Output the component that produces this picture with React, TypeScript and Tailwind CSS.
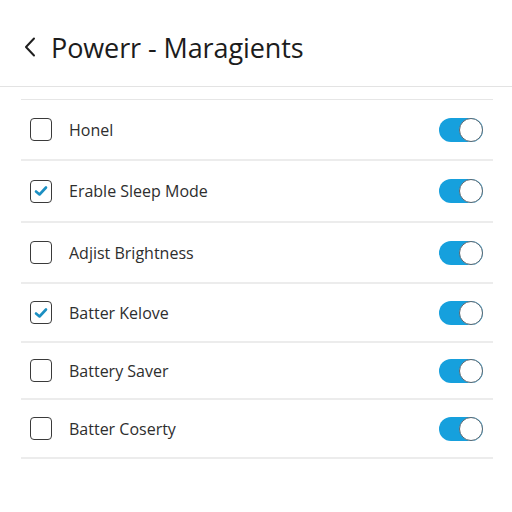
import React from 'react';

const ROWS = [
  { label: 'Honel', checked: false, h: 'h-[61px]' },
  { label: 'Erable Sleep Mode', checked: true, h: 'h-[62px]' },
  { label: 'Adjist Brightness', checked: false, h: 'h-[61px]' },
  { label: 'Batter Kelove', checked: true, h: 'h-[59px]' },
  { label: 'Battery Saver', checked: false, h: 'h-[57px]' },
  { label: 'Batter Coserty', checked: false, h: 'h-[59px]' },
];

const Checkbox: React.FC<{ checked: boolean }> = ({ checked }) => (
  <div className="w-[22px] h-[23px] rounded-[4px] border-[1.5px] border-[#3a3a3a] flex items-center justify-center shrink-0">
    {checked && (
      <svg width="14" height="12" viewBox="0 0 14 12" fill="none">
        <path d="M2 6.5 L5.5 9.5 L12 2.5" stroke="#1b8fc2" strokeWidth="2.6" strokeLinecap="round" strokeLinejoin="round" />
      </svg>
    )}
  </div>
);

const Toggle: React.FC = () => (
  <div className="w-[44px] h-[24px] rounded-full bg-[#16a0dd] relative shrink-0">
    <div className="absolute right-0 top-0 w-[24px] h-[24px] rounded-full bg-white border border-[#5a6670]" />
  </div>
);

export default function App() {
  return (
    <div className="w-[512px] h-[512px] bg-white overflow-hidden" style={{ fontFamily: '"Open Sans", sans-serif' }}>
      {/* Header */}
      <div className="h-[87px] border-b border-[#e3e3e3] flex items-center pl-[24px] pt-[8px]">
        <svg width="12" height="20" viewBox="0 0 12 20" fill="none" className="mr-[15px]">
          <path d="M10 1.5 L2 10 L10 18.5" stroke="#1f1f1f" strokeWidth="2" strokeLinecap="round" strokeLinejoin="round" />
        </svg>
        <h1 className="text-[27px] leading-none text-[#1c1c1c] tracking-[-0.1px]">Powerr - Maragients</h1>
      </div>

      {/* Settings list */}
      <div className="mx-[21px] mt-[12px] border-t border-[#e6e6e6] w-[472px]">
        {ROWS.map((row) => (
          <div key={row.label} className={`${row.h} border-b-2 border-[#ececec] flex items-center pl-[9px] pr-[10px]`}>
            <Checkbox checked={row.checked} />
            <span className="ml-[17px] text-[16px] text-[#2e2e2e] flex-1">{row.label}</span>
            <Toggle />
          </div>
        ))}
      </div>
    </div>
  );
}
